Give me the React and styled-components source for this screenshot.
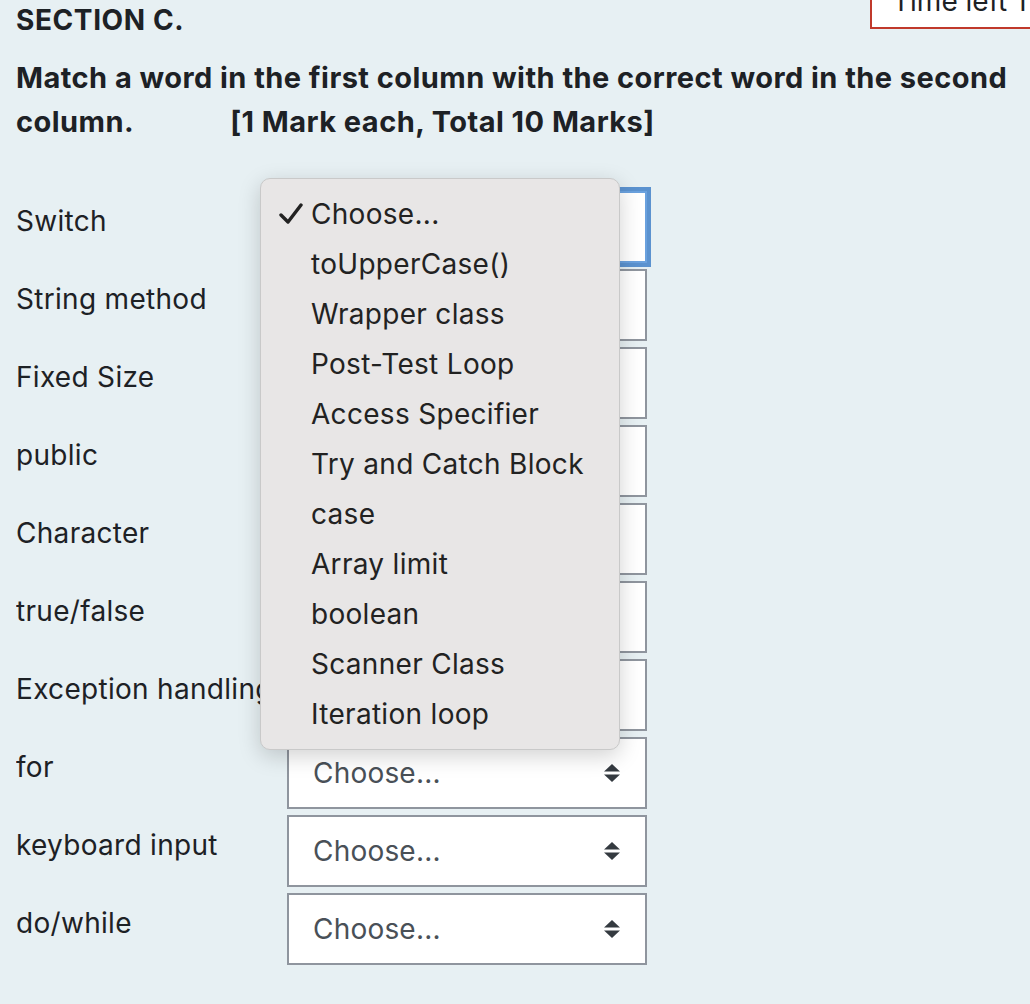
import React from 'react';
import styled, { createGlobalStyle } from 'styled-components';

const GlobalStyle = createGlobalStyle`
  html, body {
    margin: 0;
    padding: 0;
    background: #e7f0f3;
  }
  body {
    font-family: Inter, "Liberation Sans", Arial, sans-serif;
    color: #1d2125;
    overflow: hidden;
  }
`;

const leftWords = [
  'Switch',
  'String method',
  'Fixed Size',
  'public',
  'Character',
  'true/false',
  'Exception handling',
  'for',
  'keyboard input',
  'do/while',
];

const options = [
  'Choose...',
  'toUpperCase()',
  'Wrapper class',
  'Post-Test Loop',
  'Access Specifier',
  'Try and Catch Block',
  'case',
  'Array limit',
  'boolean',
  'Scanner Class',
  'Iteration loop',
];

function SortArrows() {
  return (
    <svg width="16" height="18" viewBox="0 0 16 18">
      <path d="M8 0 L16 7.5 L0 7.5 Z" fill="#343a40" />
      <path d="M0 10.5 L16 10.5 L8 18 Z" fill="#343a40" />
    </svg>
  );
}

function CheckMark() {
  return (
    <svg width="24" height="22" viewBox="0 0 24 22">
      <path
        d="M2 12 L9 19 L22 2"
        fill="none"
        stroke="#222"
        strokeWidth="3.4"
        strokeLinecap="round"
        strokeLinejoin="round"
      />
    </svg>
  );
}

function App() {
  return (
    <>
      <GlobalStyle />
      <Page>
        <HeaderRow>
          <SectionTitle>SECTION C.</SectionTitle>
          <TimerBox>Time left 1</TimerBox>
        </HeaderRow>
        <Intro>
          Match a word in the first column with the correct word in the second
          <br />
          column.<Marks>[1 Mark each, Total 10 Marks]</Marks>
        </Intro>

        <MatchTable>
          {leftWords.map((word, i) => (
            <MatchRow key={word}>
              <Label>{word}</Label>
              <SelectBox focused={i === 0}>
                <span>Choose...</span>
                <SortArrows />
              </SelectBox>
            </MatchRow>
          ))}

          <Menu>
            {options.map((opt, i) => (
              <MenuItem key={opt}>
                <CheckSlot>{i === 0 && <CheckMark />}</CheckSlot>
                {opt}
              </MenuItem>
            ))}
          </Menu>
        </MatchTable>
      </Page>
    </>
  );
}

const Page = styled.div`
  position: relative;
  padding: 0 0 0 16px;
  min-height: 1004px;
  box-sizing: border-box;
`;

const HeaderRow = styled.div`
  display: flex;
  justify-content: space-between;
  align-items: flex-start;
`;

const SectionTitle = styled.h3`
  margin: 5px 0 0;
  font-size: 28px;
  font-weight: 700;
  line-height: 30px;
  letter-spacing: 0.6px;
  color: #1d2125;
`;

const TimerBox = styled.div`
  margin-top: -22px;
  width: 160px;
  height: 51px;
  box-sizing: border-box;
  border: 2px solid #c0392b;
  border-right: none;
  background: #fff;
  padding: 6px 0 0 20px;
  font-size: 28px;
  line-height: 30px;
  color: #1d2125;
  white-space: nowrap;
  overflow: hidden;
`;

const Intro = styled.p`
  margin: 21px 0 0;
  font-size: 29px;
  font-weight: 700;
  line-height: 44px;
  letter-spacing: 0.45px;
  color: #1d2125;
  white-space: nowrap;
`;

const Marks = styled.span`
  margin-left: 96px;
`;

const MatchTable = styled.div`
  position: relative;
  margin-top: 47px;
  display: flex;
  flex-direction: column;
  gap: 6px;
`;

const MatchRow = styled.div`
  display: grid;
  grid-template-columns: 271px 360px;
  align-items: start;
`;

const Label = styled.div`
  padding-top: 13px;
  font-size: 28px;
  line-height: 34px;
  letter-spacing: 0.3px;
  color: #1d2125;
  white-space: nowrap;
  overflow: hidden;
`;

const SelectBox = styled.div`
  height: 72px;
  box-sizing: border-box;
  border: 2px solid ${(p) => (p.focused ? '#6aa1de' : '#8f959e')};
  box-shadow: ${(p) => (p.focused ? '0 0 0 4px #5b92cf' : 'none')};
  background: #fff;
  display: flex;
  align-items: center;
  justify-content: space-between;
  padding: 0 25px 0 24px;
  font-size: 28px;
  letter-spacing: 0.2px;
  color: #495057;
`;

const Menu = styled.div`
  position: absolute;
  left: 244px;
  top: -13px;
  width: 360px;
  box-sizing: border-box;
  padding: 10px 0;
  background: #e8e6e6;
  border: 1px solid #c9c9c9;
  border-radius: 10px;
  box-shadow: 0 6px 22px rgba(0, 0, 0, 0.18);
`;

const MenuItem = styled.div`
  height: 50px;
  display: flex;
  align-items: center;
  font-size: 28px;
  letter-spacing: 0.3px;
  color: #222;
  white-space: nowrap;
`;

const CheckSlot = styled.span`
  width: 50px;
  display: flex;
  justify-content: flex-end;
  padding-right: 8px;
  box-sizing: border-box;
`;

export default App;
